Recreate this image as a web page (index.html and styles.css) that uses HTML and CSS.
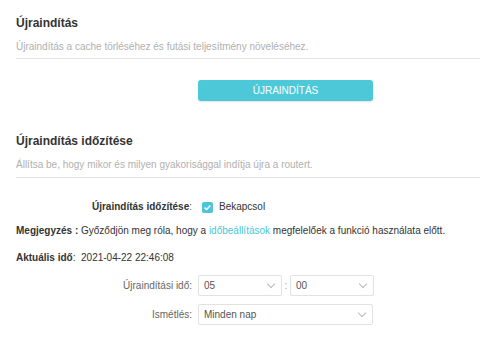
FILE: index.html
```html
<!DOCTYPE html>
<html lang="hu">
<head>
    <meta charset="UTF-8">
    <meta name="viewport" content="width=device-width, initial-scale=1.0">
    <title>Újraindítás</title>
    <link rel="stylesheet" href="styles.css">
</head>
<body>

    <div class="panel">
        <!-- Reboot now -->
        <div class="section">
            <div class="section-title">Újraindítás</div>
            <div class="section-desc">Újraindítás a cache törléséhez és futási teljesítmény növeléséhez.</div>
        </div>
        <div class="form-row button-row">
            <div class="form-label"></div>
            <button class="btn-reboot">ÚJRAINDÍTÁS</button>
        </div>

        <!-- Scheduled reboot -->
        <div class="section section-second">
            <div class="section-title">Újraindítás időzítése</div>
            <div class="section-desc">Állítsa be, hogy mikor és milyen gyakorisággal indítja újra a routert.</div>
        </div>

        <div class="form-row check-row">
            <div class="form-label"><b>Újraindítás időzítése</b>:</div>
            <label class="checkbox">
                <span class="check-box">
                    <svg width="11" height="11" viewBox="0 0 11 11"><path d="M2.6 5.6 L4.6 7.5 L8.4 3.6" fill="none" stroke="#fff" stroke-width="1.5"/></svg>
                </span>
                Bekapcsol
            </label>
        </div>

        <div class="note-row"><b>Megjegyzés :</b> Győződjön meg róla, hogy a <a href="#" class="link">időbeállítások</a> megfelelőek a funkció használata előtt.</div>

        <div class="note-row time-row"><b>Aktuális idő</b>:&nbsp; 2021-04-22 22:46:08</div>

        <div class="form-row select-row">
            <div class="form-label">Újraindítási idő:</div>
            <div class="select select-small"><span>05</span><i class="chevron"></i></div>
            <span class="colon">:</span>
            <div class="select select-small"><span>00</span><i class="chevron"></i></div>
        </div>

        <div class="form-row select-row">
            <div class="form-label">Ismétlés:</div>
            <div class="select select-wide"><span>Minden nap</span><i class="chevron"></i></div>
        </div>
    </div>

</body>
</html>
```

FILE: styles.css
```css
/* Reboot settings page */
body {
    margin: 0;
    font-family: "Liberation Sans", Arial, sans-serif;
    font-size: 10px;
    color: #333;
    background-color: #fff;
}

.panel {
    padding: 15px 0 0 16px;
}

.section {
    border-bottom: 1px solid #e3e3e3;
    padding-bottom: 3px;
}

.section-second {
    margin-top: 32px;
    padding-bottom: 4px;
}

.section-title {
    font-size: 12px;
    font-weight: bold;
    line-height: 16px;
    color: #333;
}

.section-desc {
    margin-top: 8px;
    line-height: 16px;
    color: #b0b0b0;
}

.form-row {
    display: flex;
    align-items: center;
}

.form-label {
    width: 176px;
    margin-right: 6px;
    text-align: right;
    color: #666;
}

.form-label b {
    color: #333;
}

.button-row {
    margin-top: 21px;
}

.btn-reboot {
    width: 175px;
    height: 21px;
    border: none;
    border-radius: 3px;
    background-color: #4dc8d9;
    color: #fff;
    font-family: "Liberation Sans", Arial, sans-serif;
    font-size: 10px;
    cursor: pointer;
    box-shadow: 0 1px 2px rgba(0, 0, 0, 0.12);
}

.check-row {
    margin-top: 23px;
    line-height: 12px;
}

.checkbox {
    display: flex;
    align-items: center;
    margin-left: 4px;
    color: #333;
}

.check-box {
    display: inline-flex;
    width: 11px;
    height: 11px;
    border-radius: 2px;
    background-color: #4ac6d8;
    margin-right: 6px;
}

.note-row {
    margin-top: 12px;
    line-height: 12px;
    color: #333;
}

.link {
    color: #4ac6d8;
    text-decoration: none;
}

.time-row {
    margin-top: 15px;
}

.select-row {
    margin-top: 8px;
}

.time-row + .select-row {
    margin-top: 11px;
}

.select {
    display: flex;
    align-items: center;
    justify-content: space-between;
    height: 19px;
    padding: 0 7px 0 5px;
    border: 1px solid #e2e2e2;
    border-radius: 2px;
    color: #555;
    box-sizing: content-box;
}

.select-small {
    width: 70px;
}

.select-wide {
    width: 161px;
}

.colon {
    width: 8px;
    text-align: center;
    color: #aaa;
}

.chevron {
    width: 5px;
    height: 5px;
    border-right: 1px solid #bbb;
    border-bottom: 1px solid #bbb;
    transform: rotate(45deg);
    margin-top: -3px;
}
```
